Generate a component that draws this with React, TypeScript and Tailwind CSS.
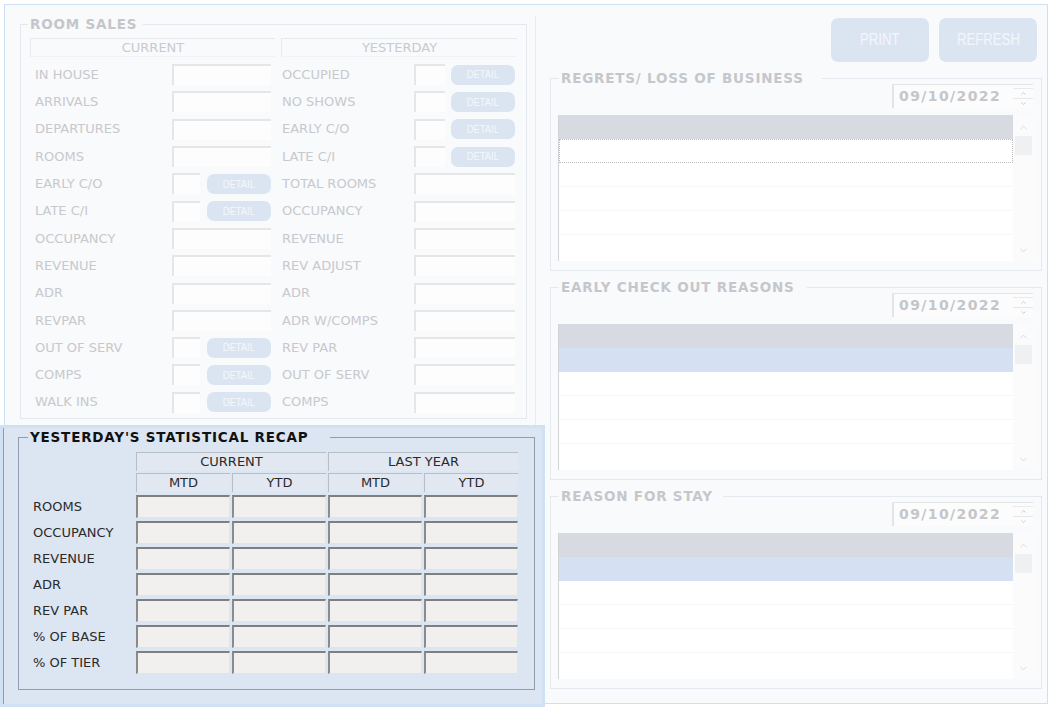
import React from "react";
import { ChevronUp, ChevronDown } from "lucide-react";

/* =========================
   DATA
========================== */
type Row = { label: string; detail?: boolean };

const currentRows: Row[] = [
  { label: "IN HOUSE" },
  { label: "ARRIVALS" },
  { label: "DEPARTURES" },
  { label: "ROOMS" },
  { label: "EARLY C/O", detail: true },
  { label: "LATE C/I", detail: true },
  { label: "OCCUPANCY" },
  { label: "REVENUE" },
  { label: "ADR" },
  { label: "REVPAR" },
  { label: "OUT OF SERV", detail: true },
  { label: "COMPS", detail: true },
  { label: "WALK INS", detail: true },
];

const yesterdayRows: Row[] = [
  { label: "OCCUPIED", detail: true },
  { label: "NO SHOWS", detail: true },
  { label: "EARLY C/O", detail: true },
  { label: "LATE C/I", detail: true },
  { label: "TOTAL ROOMS" },
  { label: "OCCUPANCY" },
  { label: "REVENUE" },
  { label: "REV ADJUST" },
  { label: "ADR" },
  { label: "ADR W/COMPS" },
  { label: "REV PAR" },
  { label: "OUT OF SERV" },
  { label: "COMPS" },
];

const recapRows = [
  "ROOMS",
  "OCCUPANCY",
  "REVENUE",
  "ADR",
  "REV PAR",
  "% OF BASE",
  "% OF TIER",
];

const inputCls =
  "h-[21px] bg-[#fdfdfe] border-t-2 border-l-2 border-[#e5e6e8] shrink-0";

const titleCls =
  "pl-[2px] text-[13.5px] leading-[16px] font-bold tracking-[0.8px] whitespace-nowrap";

const narrowCls = "font-['Liberation_Sans',sans-serif] inline-block";

/* =========================
   SMALL PIECES
========================== */
function DetailButton({ cls }: { cls: string }) {
  return (
    <div
      className={
        "h-[20px] w-[64px] rounded-[7px] bg-[#dbe5f2] text-[#f4f7fb] text-[11px] flex items-center justify-center " +
        cls
      }
    >
      <span className={narrowCls + " scale-x-[0.85]"}>DETAIL</span>
    </div>
  );
}

function SalesColumn({
  rows,
  labelCls,
  fullCls,
  smallCls,
  gapCls,
}: {
  rows: Row[];
  labelCls: string;
  fullCls: string;
  smallCls: string;
  gapCls: string;
}) {
  return (
    <div className="flex flex-col">
      {rows.map((r, i) => (
        <div key={i} className="h-[27.3px] flex items-center">
          <div
            className={
              "text-[13px] text-[#c7c9cc] whitespace-nowrap shrink-0 " +
              labelCls
            }
          >
            {r.label}
          </div>
          {r.detail ? (
            <>
              <div className={inputCls + " " + smallCls} />
              <DetailButton cls={gapCls} />
            </>
          ) : (
            <div className={inputCls + " " + fullCls} />
          )}
        </div>
      ))}
    </div>
  );
}

function DateField() {
  return (
    <div className="flex w-[141px] h-[24px] bg-[#fcfcfd] border-t border-l-2 border-[#e3e4e6]">
      <div className="pl-[5px] text-[14px] leading-[23px] font-bold tracking-[1.4px] text-[#c4c6c9]">
        09/10/2022
      </div>
      <div className="ml-auto w-[20px] flex flex-col border-t border-[#e9eaec] mt-[3px]">
        <div className="h-[10px] border-b border-[#e6e7e9] flex items-center justify-center">
          <svg width="5" height="3" viewBox="0 0 5 3">
            <path d="M0.5 2.5 L2.5 0.5 L4.5 2.5" stroke="#c9cbce" fill="none" />
          </svg>
        </div>
        <div className="h-[9px] flex items-center justify-center">
          <svg width="5" height="3" viewBox="0 0 5 3">
            <path d="M0.5 0.5 L2.5 2.5 L4.5 0.5" stroke="#c9cbce" fill="none" />
          </svg>
        </div>
      </div>
    </div>
  );
}

function ReasonBox({
  title,
  legendW,
  dotted,
  boxCls,
}: {
  title: string;
  legendW: string;
  dotted?: boolean;
  boxCls: string;
}) {
  return (
    <fieldset
      className={
        "w-[492px] h-[201px] border border-[#e5e9ef] shrink-0 " + boxCls
      }
    >
      <legend className={"ml-[8px] text-[#c5c7cb] " + titleCls + " " + legendW}>
        {title}
      </legend>
      <div className="-mt-[2px] flex justify-end pr-[8px]">
        <DateField />
      </div>
      <div className="mt-[7px] ml-[7px] w-[476px] h-[146px] border-l border-[#d3d4d6] bg-white flex">
        <div className="flex-1 flex flex-col">
          <div className="h-[24px] bg-[#d7dbe1]" />
          {dotted ? (
            <div className="h-[24px] border border-dotted border-[#bdbdbd] bg-white" />
          ) : (
            <div className="h-[24px] bg-[#d5e1f3]" />
          )}
          <div className="h-[24px] border-b border-[#f6f7f8]" />
          <div className="h-[24px] border-b border-[#f6f7f8]" />
          <div className="h-[24px] border-b border-[#f6f7f8]" />
        </div>
        <div className="w-[21px] bg-[#fbfbfc] flex flex-col items-center">
          <ChevronUp
            size={11}
            strokeWidth={1.5}
            className="mt-[7px] text-[#c8cacd]"
          />
          <div className="mt-[3px] w-[17px] h-[19px] bg-[#eef0f2]" />
          <ChevronDown
            size={11}
            strokeWidth={1.5}
            className="mt-auto mb-[5px] text-[#c8cacd]"
          />
        </div>
      </div>
    </fieldset>
  );
}

function RecapCell() {
  return (
    <div className="w-[94px] h-[23px] bg-[#f1f0ee] border-t-2 border-l-2 border-t-[#7f7f7f] border-l-[#8b8b8b] border-b border-r border-b-[#e4e4e4] border-r-[#e4e4e4]" />
  );
}

/* =========================
   UI
========================== */
export default function App() {
  return (
    <div className="w-[1056px] h-[709px] bg-white overflow-hidden font-['DejaVu_Sans',sans-serif]">
      <div className="ml-[4px] mt-[4px] w-[1044px] h-[700px] border border-[#cfe0f3] bg-[#f9fafc] flex">
        {/* Left side */}
        <div className="w-[531px] flex flex-col shrink-0">
          {/* Room sales */}
          <div className="h-[420px] pt-[11px] shrink-0">
            <div className="h-full border-r border-[#e6ebf1] pl-[15px]">
              <fieldset className="w-[507px] h-[403px] border border-[#e4e8ee]">
                <legend className={"ml-[7px] w-[115px] text-[#c4c6c9] " + titleCls}>
                  ROOM SALES
                </legend>
                <div className="mt-[6px] pl-[9px] grid grid-cols-[245px_236px] gap-x-[6px]">
                  <div className="h-[19px] border-t border-l border-[#e6e9ed] border-b border-b-[#f1f3f6] text-center text-[13px] leading-[18px] text-[#c8cacd]">
                    CURRENT
                  </div>
                  <div className="h-[19px] border-t border-l border-[#e6e9ed] border-b border-b-[#f1f3f6] text-center text-[13px] leading-[18px] text-[#c8cacd]">
                    YESTERDAY
                  </div>
                  <div className="mt-[4px]">
                    <SalesColumn
                      rows={currentRows}
                      labelCls="w-[142px] pl-[5px]"
                      fullCls="w-[99px]"
                      smallCls="w-[28px]"
                      gapCls="ml-[7px]"
                    />
                  </div>
                  <div className="mt-[4px]">
                    <SalesColumn
                      rows={yesterdayRows}
                      labelCls="w-[133px] pl-[1px]"
                      fullCls="w-[101px]"
                      smallCls="w-[31px]"
                      gapCls="ml-[6px]"
                    />
                  </div>
                </div>
              </fieldset>
            </div>
          </div>

          {/* Statistical recap */}
          <div className="-ml-[5px] w-[545px] h-[282px] shrink-0 border-[3px] border-[#d0e1f4] bg-[#dce6f2]">
            <div className="h-full border-l border-[#9a9a9a] pl-[14px] pt-[1px]">
              <fieldset className="w-[517px] h-[261px] border border-[#8f9db0]">
                <legend className={"ml-[9px] w-[302px] text-[#111111] " + titleCls}>
                  YESTERDAY'S STATISTICAL RECAP
                </legend>
                <div className="mt-[7px] pl-[14px] flex flex-col">
                  <div className="flex gap-[2px]">
                    <div className="w-[101px]" />
                    <div className="w-[190px] h-[19px] bg-[#e1e8f1] border-t border-l border-[#b9bec5] text-center text-[13px] leading-[18px] text-[#2a2a2a]">
                      CURRENT
                    </div>
                    <div className="w-[190px] h-[19px] bg-[#e1e8f1] border-t border-l border-[#b9bec5] text-center text-[13px] leading-[18px] text-[#2a2a2a]">
                      LAST YEAR
                    </div>
                  </div>
                  <div className="mt-[2px] flex gap-[2px]">
                    <div className="w-[101px]" />
                    {["MTD", "YTD", "MTD", "YTD"].map((h, i) => (
                      <div
                        key={i}
                        className="w-[94px] h-[19px] bg-[#e1e8f1] border-t border-l border-[#b9bec5] text-center text-[13px] leading-[18px] text-[#2a2a2a]"
                      >
                        {h}
                      </div>
                    ))}
                  </div>
                  <div className="mt-[3px] flex flex-col gap-[3px]">
                    {recapRows.map((label) => (
                      <div key={label} className="flex gap-[2px] items-center">
                        <div className="w-[101px] text-[13px] text-[#2a2a2a] whitespace-nowrap">
                          {label}
                        </div>
                        <RecapCell />
                        <RecapCell />
                        <RecapCell />
                        <RecapCell />
                      </div>
                    ))}
                  </div>
                </div>
              </fieldset>
            </div>
          </div>
        </div>

        {/* Right side */}
        <div className="w-[511px] pl-[14px] pr-[5px] pt-[13px] flex flex-col shrink-0">
          <div className="flex justify-end gap-[10px] pr-[5px]">
            <button className="w-[98px] h-[44px] rounded-[7px] bg-[#dbe5f2] text-[#f3f6fb] text-[16.5px]">
              <span className={narrowCls + " scale-x-[0.8]"}>PRINT</span>
            </button>
            <button className="w-[98px] h-[44px] rounded-[7px] bg-[#dbe5f2] text-[#f3f6fb] text-[16.5px]">
              <span className={narrowCls + " scale-x-[0.8]"}>REFRESH</span>
            </button>
          </div>
          <ReasonBox
            title="REGRETS/ LOSS OF BUSINESS"
            legendW="w-[263px]"
            dotted
            boxCls="mt-[8px]"
          />
          <ReasonBox
            title="EARLY CHECK OUT REASONS"
            legendW="w-[248px]"
            boxCls="mt-[8px]"
          />
          <ReasonBox
            title="REASON FOR STAY"
            legendW="w-[164px]"
            boxCls="mt-[8px]"
          />
        </div>
      </div>
    </div>
  );
}
